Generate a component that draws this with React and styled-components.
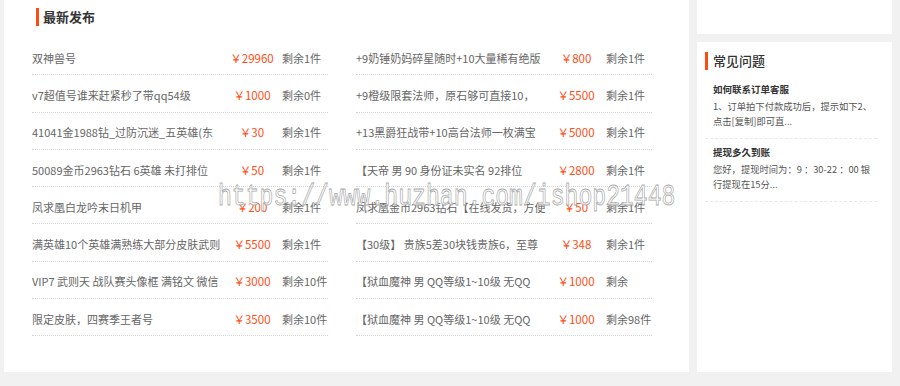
import React from "react";
import styled, { createGlobalStyle } from "styled-components";

const GlobalStyle = createGlobalStyle`
  body {
    margin: 0;
    background: #f1f1f1;
    font-family: "Noto Sans CJK SC", "Liberation Sans", sans-serif;
  }
`;

const Page = styled.div`
  position: relative;
  display: flex;
  gap: 8px;
  padding-left: 4px;
  height: 386px;
  overflow: hidden;
`;

const MainPanel = styled.section`
  width: 685px;
  height: 372px;
  box-sizing: border-box;
  background: #fff;
  padding: 8px 0 0 28px;
`;

const Title = styled.h2`
  margin: 0 0 0 ${(p) => p.indent || 0}px;
  height: 18px;
  line-height: 18px;
  border-left: 3px solid #ff4a12;
  padding-left: ${(p) => p.gap || 4}px;
  font-size: 13px;
  font-weight: ${(p) => p.weight || 700};
  color: #333;
`;

const Grid = styled.ul`
  list-style: none;
  margin: 12px 0 0;
  padding: 0;
  display: grid;
  grid-template-columns: 296px 296px;
  column-gap: 28px;
`;

const Row = styled.li`
  display: flex;
  align-items: center;
  height: 37.3px;
  padding-top: 3px;
  box-sizing: border-box;
  border-bottom: 1px dotted #d6d6d6;
  font-size: 11px;
  color: #666;
  white-space: nowrap;
  overflow: hidden;
`;

const Name = styled.span`
  flex: none;
  width: 190px;
  overflow: hidden;
`;

const Price = styled.span`
  flex: none;
  width: 60px;
  text-align: center;
  font-size: 11.5px;
  color: #ff4e16;
`;

const Stock = styled.span`
  flex: none;
  color: #666;
`;

const Side = styled.aside`
  width: 195px;
  display: flex;
  flex-direction: column;
  gap: 8px;
`;

const TopCard = styled.div`
  height: 34px;
  background: #fff;
`;

const FaqCard = styled.div`
  height: 330px;
  box-sizing: border-box;
  background: #fff;
  padding: 10px 15px 0 8px;
`;

const FaqList = styled.div`
  margin-top: 6px;
`;

const FaqItem = styled.div`
  padding: 5px 0 9px 8px;
  border-bottom: 1px dashed #eaeaea;
`;

const Question = styled.div`
  font-size: 9.5px;
  font-weight: 700;
  line-height: 16px;
  color: #333;
`;

const Answer = styled.div`
  margin-top: 2px;
  font-size: 9.3px;
  line-height: 15px;
  color: #555;
`;

const Watermark = styled.div`
  position: absolute;
  left: 218px;
  top: 182px;
  font-family: "Liberation Mono", monospace;
  font-size: 30px;
  line-height: 30px;
  white-space: nowrap;
  color: rgba(255, 255, 255, 0.85);
  -webkit-text-stroke: 0.8px #a8a8a8;
  transform: scaleX(0.77);
  transform-origin: left top;
  pointer-events: none;
`;

const goods = [
  ["双神兽号", "29960", "剩余1件"],
  ["+9奶锤奶妈碎星随时+10大量稀有绝版", "800", "剩余1件"],
  ["v7超值号谁来赶紧秒了带qq54级", "1000", "剩余0件"],
  ["+9橙级限套法师，原石够可直接10，", "5500", "剩余1件"],
  ["41041金1988钻_过防沉迷_五英雄(东", "30", "剩余1件"],
  ["+13黑爵狂战带+10高台法师一枚满宝", "5000", "剩余1件"],
  ["50089金币2963钻石 6英雄 未打排位", "50", "剩余1件"],
  ["【天帝 男 90 身份证未实名 92排位", "2800", "剩余1件"],
  ["凤求凰白龙吟末日机甲", "200", "剩余1件"],
  ["凤求凰金币2963钻石【在线发货，方便", "50", "剩余1件"],
  ["满英雄10个英雄满熟练大部分皮肤武则", "5500", "剩余1件"],
  ["【30级】 贵族5差30块钱贵族6，至尊", "348", "剩余1件"],
  ["VIP7 武则天 战队赛头像框 满铭文 微信", "3000", "剩余10件"],
  ["【狱血魔神 男 QQ等级1~10级 无QQ", "1000", "剩余"],
  ["限定皮肤，四赛季王者号", "3500", "剩余10件"],
  ["【狱血魔神 男 QQ等级1~10级 无QQ", "1000", "剩余98件"],
];

const faqs = [
  {
    q: "如何联系订单客服",
    a: "1、订单拍下付款成功后，提示如下2、点击[复制]即可直...",
  },
  {
    q: "提现多久到账",
    a: "您好，提现时间为：9 ：30-22 ：00 银行提现在15分...",
  },
];

const App = () => {
  return (
    <>
      <GlobalStyle />
      <Page>
        <MainPanel>
          <Title indent={4}>最新发布</Title>
          <Grid>
            {goods.map(([name, price, stock], i) => (
              <Row key={i}>
                <Name>{name}</Name>
                <Price>￥{price}</Price>
                <Stock>{stock}</Stock>
              </Row>
            ))}
          </Grid>
        </MainPanel>
        <Side>
          <TopCard />
          <FaqCard>
            <Title gap={5} weight={500}>常见问题</Title>
            <FaqList>
              {faqs.map((f) => (
                <FaqItem key={f.q}>
                  <Question>{f.q}</Question>
                  <Answer>{f.a}</Answer>
                </FaqItem>
              ))}
            </FaqList>
          </FaqCard>
        </Side>
        <Watermark>https://www.huzhan.com/ishop21448</Watermark>
      </Page>
    </>
  );
};

export default App;
